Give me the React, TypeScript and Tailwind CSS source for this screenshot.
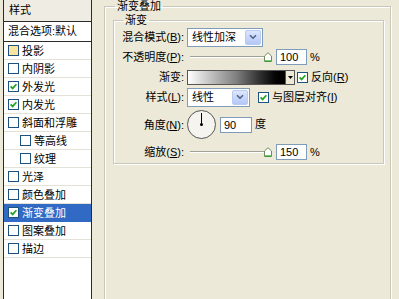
import React from 'react';

type Item = { label: string; checked?: boolean; indent?: boolean; selected?: boolean; hover?: boolean };

const items: Item[] = [
  { label: '投影', hover: true },
  { label: '内阴影' },
  { label: '外发光', checked: true },
  { label: '内发光', checked: true },
  { label: '斜面和浮雕' },
  { label: '等高线', indent: true },
  { label: '纹理', indent: true },
  { label: '光泽' },
  { label: '颜色叠加' },
  { label: '渐变叠加', checked: true, selected: true },
  { label: '图案叠加' },
  { label: '描边' },
];

function Check({ checked, hover }: { checked?: boolean; hover?: boolean }) {
  return (
    <span
      className={`inline-flex h-[11px] w-[11px] shrink-0 items-center justify-center border border-[#1C5180] ${
        hover ? 'bg-[#F9E4A2]' : 'bg-white'
      }`}
    >
      {checked && (
        <svg width="7" height="7" viewBox="0 0 7 7">
          <path d="M0.6 3.4 L2.6 5.4 L6.4 1.2" stroke="#21A121" strokeWidth="1.7" fill="none" />
        </svg>
      )}
    </span>
  );
}

function Chevron() {
  return (
    <span className="flex h-full w-[16px] items-center justify-center rounded-[2px] border border-[#B9CBF3] bg-gradient-to-b from-[#DCE6FD] to-[#B4C8F6]">
      <svg width="8" height="6" viewBox="0 0 8 6">
        <path d="M1 1.2 L4 4.2 L7 1.2" stroke="#4D6185" strokeWidth="1.6" fill="none" />
      </svg>
    </span>
  );
}

function Select({ value, width }: { value: string; width: string }) {
  return (
    <div className={`flex h-[19px] ${width} items-center border border-[#7F9DB9] bg-white p-[1px]`}>
      <span className="flex-1 pl-[3px] leading-[12px]">{value}</span>
      <Chevron />
    </div>
  );
}

function Slider() {
  return (
    <div className="relative ml-[3px] h-[10px] w-[82px]">
      <div className="absolute left-0 right-[4px] top-[4px] h-[2px] border-t border-[#A0A09A] bg-white" />
      <svg className="absolute right-0 top-[0px]" width="8" height="10" viewBox="0 0 8 10">
        <path d="M0.5 9.5 V4 L4 0.7 L7.5 4 V9.5 Z" fill="#fff" stroke="#6B8E5A" strokeWidth="1" />
        <path d="M1 9 H7" stroke="#21A121" strokeWidth="1.2" />
      </svg>
    </div>
  );
}

function NumBox({ value, w = 'w-[31px]' }: { value: string; w?: string }) {
  return (
    <div className={`flex h-[16px] ${w} items-center border border-[#7F9DB9] bg-white pl-[3px] leading-[12px]`}>
      {value}
    </div>
  );
}

function Label({ children }: { children: React.ReactNode }) {
  return <div className="flex items-center justify-end whitespace-nowrap leading-[12px]">{children}</div>;
}

export default function App() {
  return (
    <div className="flex h-[299px] w-[399px] overflow-hidden bg-[#ECE9D8] font-['Liberation_Sans','Noto_Sans_CJK_SC',sans-serif] text-[11px] text-black">
      {/* left list */}
      <div className="ml-[3px] flex h-[320px] w-[89px] shrink-0 flex-col border-x border-[#2B2B2B] bg-white">
        <div className="flex h-[22px] items-center border-b border-[#2B2B2B] bg-[#EFEDE3] pl-[5px]">样式</div>
        <div className="flex h-[20px] items-center border-b border-[#2B2B2B] pl-[4px]">混合选项:默认</div>
        {items.map((it) => (
          <div
            key={it.label}
            className={`flex h-[18px] items-center gap-[3px] border-b ${
              it.selected ? 'border-[#316AC5] bg-[#316AC5] text-white' : 'border-[#E4E2D7]'
            } ${it.indent ? 'pl-[16px]' : 'pl-[4px]'}`}
          >
            <Check checked={it.checked} hover={it.hover} />
            <span className="leading-[12px]">{it.label}</span>
          </div>
        ))}
      </div>

      {/* right panel */}
      <fieldset className="ml-[12px] mr-[8px] h-[330px] min-w-0 flex-1 border border-[#C9C7BA] pl-[8px] pr-[6px] shadow-[inset_1px_1px_0_#fff,1px_1px_0_#fff]">
        <legend className="ml-[2px] px-[2px] leading-[12px]">渐变叠加</legend>
        <fieldset className="mt-[2px] border border-[#C9C7BA] pb-[1px] pt-[1px] shadow-[inset_1px_1px_0_#fff,1px_1px_0_#fff]">
          <legend className="ml-[9px] px-[2px] leading-[12px]">渐变</legend>
          <div className="grid grid-cols-[70px_1fr] gap-x-[3px]">
            <div className="contents">
              <Label>
                混合模式(<span className="underline">B</span>):
              </Label>
              <div className="flex h-[20px] items-center">
                <Select value="线性加深" width="w-[76px]" />
              </div>
            </div>

            <Label>
              不透明度(<span className="underline">P</span>):
            </Label>
            <div className="flex h-[20px] items-center">
              <Slider />
              <div className="ml-[4px]">
                <NumBox value="100" />
              </div>
              <span className="ml-[3px]">%</span>
            </div>

            <Label>渐变:</Label>
            <div className="flex h-[20px] items-center">
              <div className="h-[15px] w-[99px] border border-[#555] bg-gradient-to-r from-white via-[#808080] to-black" />
              <div className="flex h-[15px] w-[9px] items-center justify-center border border-l-0 border-[#555] bg-[#ECE9D8]">
                <svg width="5" height="3" viewBox="0 0 5 3">
                  <path d="M0 0 H5 L2.5 3 Z" fill="#000" />
                </svg>
              </div>
              <div className="ml-[2px] flex items-center gap-[3px]">
                <Check checked />
                <span className="leading-[12px]">
                  反向(<span className="underline">R</span>)
                </span>
              </div>
            </div>

            <Label>
              样式(<span className="underline">L</span>):
            </Label>
            <div className="flex h-[20px] items-center">
              <Select value="线性" width="w-[63px]" />
              <div className="ml-[8px] flex items-center gap-[3px]">
                <Check checked />
                <span className="leading-[12px]">
                  与图层对齐(<span className="underline">I</span>)
                </span>
              </div>
            </div>

            <Label>
              角度(<span className="underline">N</span>):
            </Label>
            <div className="flex h-[35px] items-center">
              <div className="relative h-[29px] w-[29px] rounded-full border border-[#555] bg-[#F5F4EF]">
                <div className="absolute left-[13px] top-[2px] h-[12px] w-[1px] bg-black" />
                <div className="absolute left-[12px] top-[12px] h-[3px] w-[3px] rounded-full bg-black" />
              </div>
              <div className="ml-[4px]">
                <NumBox value="90" w="w-[32px]" />
              </div>
              <span className="ml-[3px]">度</span>
            </div>

            <Label>
              缩放(<span className="underline">S</span>):
            </Label>
            <div className="flex h-[20px] items-center">
              <Slider />
              <div className="ml-[4px]">
                <NumBox value="150" />
              </div>
              <span className="ml-[3px]">%</span>
            </div>
          </div>
        </fieldset>
      </fieldset>
    </div>
  );
}
